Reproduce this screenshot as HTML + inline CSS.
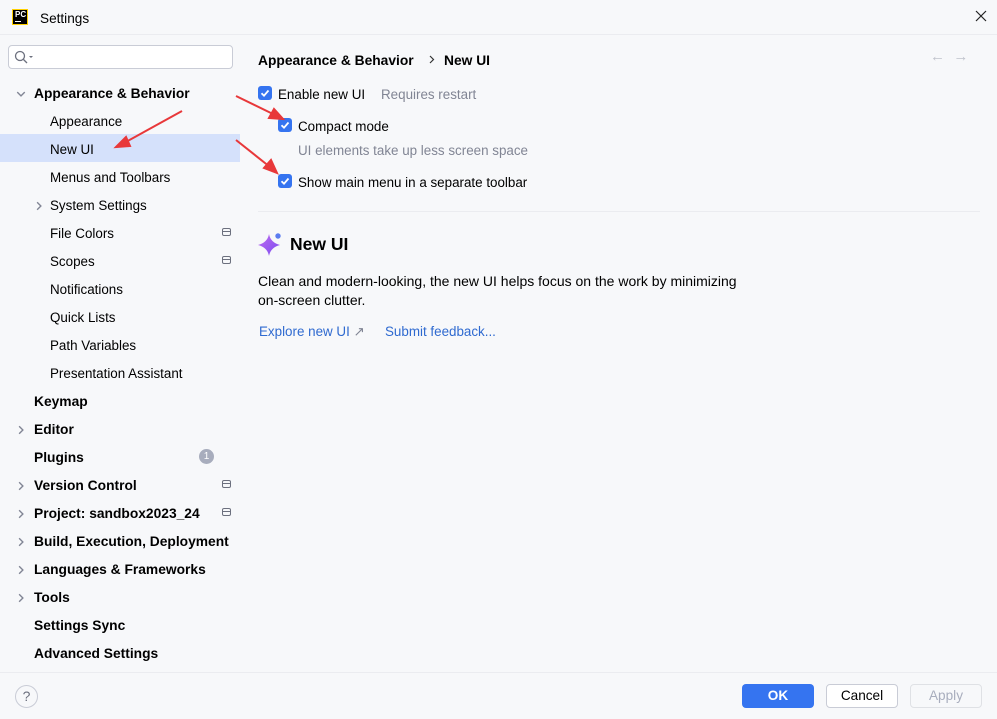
<!DOCTYPE html>
<html><head><meta charset="utf-8"><style>
*{margin:0;padding:0;box-sizing:border-box}
body{width:997px;height:719px;background:#f7f8fa;font-family:"Liberation Sans",sans-serif;font-size:13.4px;color:#000;position:relative;overflow:hidden}
.a{position:absolute;white-space:nowrap}
.b{font-weight:bold;font-size:13.8px}
.cb{position:absolute;width:14px;height:14px;background:#3574f0;border-radius:3px}
.cb svg{position:absolute;left:0;top:0}
.chev{position:absolute}
.ic{position:absolute;width:9px;height:8px;border:1.3px solid #6c707e;border-radius:2px}
.ic:after{content:"";position:absolute;left:0;right:0;top:2px;border-top:1.3px solid #6c707e}
.btn{position:absolute;height:24px;border-radius:4px;text-align:center;line-height:22px;font-size:13.6px}
</style></head><body>
<svg width="0" height="0" style="position:absolute"><defs>
<symbol id="r" viewBox="0 0 8 8"><path d="M2.5 1 5.5 4 2.5 7" fill="none" stroke="#818594" stroke-width="1.1"/></symbol>
<symbol id="d" viewBox="0 0 8 8"><path d="M1 2.5 4 5.5 7 2.5" fill="none" stroke="#818594" stroke-width="1.1"/></symbol>
</defs></svg>
<div class="a" style="left:0;top:0;width:997px;height:35px;border-bottom:1px solid #ebecf0"></div>
<div class="a" style="left:12px;top:9px;width:16px;height:16px;background:#000;border:1px solid #ffd000;color:#fff;font-size:8px;font-weight:bold;line-height:9px;padding-left:2px">PC<div style="width:6px;border-top:1px solid #fff;margin-top:2px"></div></div>
<div class="a" style="left:40px;top:11px;font-size:13.6px">Settings</div>
<svg class="a" style="left:975px;top:10px" width="12" height="12"><path d="M1 1 11 11M11 1 1 11" stroke="#222" stroke-width="1.2"/></svg>

<div class="a" style="left:8px;top:45px;width:225px;height:24px;border:1px solid #c9ccd6;border-radius:4px;background:#fff"></div>
<svg class="a" style="left:14px;top:50px" width="20" height="14"><circle cx="6" cy="6" r="4.5" fill="none" stroke="#6c707e" stroke-width="1.3"/><path d="M9.5 9.5 13 13" stroke="#6c707e" stroke-width="1.3"/><path d="M15 6h4l-2 2z" fill="#6c707e"/></svg>

<div class="a" style="left:0;top:134px;width:240px;height:28px;background:#d5e1fb"></div>
<svg class="chev" style="left:16px;top:89px" width="10" height="10"><use href="#d"/></svg>
<div class="a b" style="left:34px;top:86px">Appearance &amp; Behavior</div>
<div class="a" style="left:50px;top:114px">Appearance</div>
<div class="a" style="left:50px;top:142px">New UI</div>
<div class="a" style="left:50px;top:170px">Menus and Toolbars</div>
<svg class="chev" style="left:34px;top:201px" width="10" height="10"><use href="#r"/></svg>
<div class="a" style="left:50px;top:198px">System Settings</div>
<div class="a" style="left:50px;top:226px">File Colors</div><div class="ic" style="left:222px;top:228px"></div>
<div class="a" style="left:50px;top:254px">Scopes</div><div class="ic" style="left:222px;top:256px"></div>
<div class="a" style="left:50px;top:282px">Notifications</div>
<div class="a" style="left:50px;top:310px">Quick Lists</div>
<div class="a" style="left:50px;top:338px">Path Variables</div>
<div class="a" style="left:50px;top:366px">Presentation Assistant</div>
<div class="a b" style="left:34px;top:394px">Keymap</div>
<svg class="chev" style="left:16px;top:425px" width="10" height="10"><use href="#r"/></svg><div class="a b" style="left:34px;top:422px">Editor</div>
<div class="a b" style="left:34px;top:450px">Plugins</div>
<div class="a" style="left:199px;top:449px;width:15px;height:15px;border-radius:50%;background:#a8adbd;color:#fff;font-size:10px;text-align:center;line-height:15px">1</div>
<svg class="chev" style="left:16px;top:481px" width="10" height="10"><use href="#r"/></svg><div class="a b" style="left:34px;top:478px">Version Control</div><div class="ic" style="left:222px;top:480px"></div>
<svg class="chev" style="left:16px;top:509px" width="10" height="10"><use href="#r"/></svg><div class="a b" style="left:34px;top:506px">Project: sandbox2023_24</div><div class="ic" style="left:222px;top:508px"></div>
<svg class="chev" style="left:16px;top:537px" width="10" height="10"><use href="#r"/></svg><div class="a b" style="left:34px;top:534px">Build, Execution, Deployment</div>
<svg class="chev" style="left:16px;top:565px" width="10" height="10"><use href="#r"/></svg><div class="a b" style="left:34px;top:562px">Languages &amp; Frameworks</div>
<svg class="chev" style="left:16px;top:593px" width="10" height="10"><use href="#r"/></svg><div class="a b" style="left:34px;top:590px">Tools</div>
<div class="a b" style="left:34px;top:618px">Settings Sync</div>
<div class="a b" style="left:34px;top:646px">Advanced Settings</div>

<div class="a b" style="left:258px;top:53px">Appearance &amp; Behavior</div>
<svg class="a" style="left:427px;top:55px" width="10" height="10"><path d="M3 1 6.5 4.5 3 8" fill="none" stroke="#333" stroke-width="1.2"/></svg>
<div class="a b" style="left:444px;top:53px">New UI</div>
<div class="a" style="left:930px;top:48px;color:#c0c3cc;font-size:15px">←&nbsp;&nbsp;→</div>

<div class="cb" style="left:258px;top:86px"><svg width="14" height="14"><path d="M3.5 7.2 6 9.7 10.5 4.5" fill="none" stroke="#fff" stroke-width="1.8"/></svg></div>
<div class="a" style="left:278px;top:87px">Enable new UI</div>
<div class="a" style="left:381px;top:87px;color:#818594">Requires restart</div>
<div class="cb" style="left:278px;top:118px"><svg width="14" height="14"><path d="M3.5 7.2 6 9.7 10.5 4.5" fill="none" stroke="#fff" stroke-width="1.8"/></svg></div>
<div class="a" style="left:298px;top:119px">Compact mode</div>
<div class="a" style="left:298px;top:143px;color:#818594">UI elements take up less screen space</div>
<div class="cb" style="left:278px;top:174px"><svg width="14" height="14"><path d="M3.5 7.2 6 9.7 10.5 4.5" fill="none" stroke="#fff" stroke-width="1.8"/></svg></div>
<div class="a" style="left:298px;top:175px">Show main menu in a separate toolbar</div>
<div class="a" style="left:258px;top:211px;width:722px;border-top:1px solid #ebecf0"></div>

<svg class="a" style="left:257px;top:232px" width="26" height="26"><defs><linearGradient id="g" x1="0" y1="0" x2="1" y2="1"><stop offset="0" stop-color="#c06cf0"/><stop offset="1" stop-color="#7a4cf0"/></linearGradient></defs><path d="M12 2 Q13.5 10.5 23 13 Q13.5 15.5 12 24 Q10.5 15.5 1 13 Q10.5 10.5 12 2z" fill="url(#g)"/><circle cx="21" cy="4" r="2.7" fill="#5b7cf0"/></svg>
<div class="a b" style="left:290px;top:234px;font-size:17.5px">New UI</div>
<div class="a" style="left:258px;top:272px;line-height:19px;font-size:14px">Clean and modern-looking, the new UI helps focus on the work by minimizing<br>on-screen clutter.</div>
<div class="a" style="left:259px;top:324px;color:#2f6ad0">Explore new UI <span style="color:#818594">↗</span></div>
<div class="a" style="left:385px;top:324px;color:#2f6ad0">Submit feedback...</div>

<div class="a" style="left:0;top:672px;width:997px;border-top:1px solid #ebecf0"></div>
<div class="a" style="left:15px;top:685px;width:23px;height:23px;border:1px solid #c9ccd6;border-radius:50%;text-align:center;line-height:21px;color:#6c707e;font-size:14px">?</div>
<div class="btn b" style="left:742px;top:684px;width:72px;background:#3574f0;color:#fff;line-height:24px">OK</div>
<div class="btn" style="left:826px;top:684px;width:72px;border:1px solid #c9ccd6;background:#fff">Cancel</div>
<div class="btn" style="left:910px;top:684px;width:72px;border:1px solid #dfe1e5;color:#a8adbd">Apply</div>

<svg class="a" style="left:0;top:0" width="997" height="719"><g stroke="#e8383a" stroke-width="2" fill="#e8383a">
<line x1="182" y1="111" x2="124" y2="143"/><path d="M116 147 L126 137 L130 146 Z"/>
<line x1="236" y1="96" x2="275" y2="115"/><path d="M283 119 L269 118 L274 109 Z"/>
<line x1="236" y1="140" x2="270" y2="167"/><path d="M277 173 L264 168 L271 160 Z"/>
</g></svg>
</body></html>
